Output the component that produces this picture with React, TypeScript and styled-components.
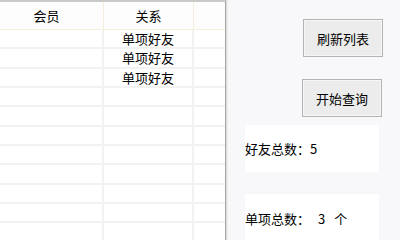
import React from "react";
import styled, { createGlobalStyle } from "styled-components";

interface Member {
  id: number,
  member: string,
  relation: string,
}

const members: Member[] = [
  { id: 1, member: "", relation: "单项好友" },
  { id: 2, member: "", relation: "单项好友" },
  { id: 3, member: "", relation: "单项好友" },
];

const ROW_COUNT = 11;

const App: React.FC = () => {
  const rows: Member[] = [...members];
  while (rows.length < ROW_COUNT) {
    rows.push({ id: rows.length + 1, member: "", relation: "" });
  }
  const oneWay = members.filter((m) => m.relation === "单项好友").length;

  return (
    <>
      <GlobalStyle />
      <Window>
        <Grid>
          <HeadCell first>会员</HeadCell>
          <HeadCell>关系</HeadCell>
          <HeadCell last />
          {rows.map((row) => (
            <React.Fragment key={row.id}>
              <Cell first>{row.member}</Cell>
              <Cell>{row.relation}</Cell>
              <Cell last />
            </React.Fragment>
          ))}
        </Grid>
        <SidePanel>
          <ActionButton>刷新列表</ActionButton>
          <ActionButton>开始查询</ActionButton>
          <StatBox>好友总数：5</StatBox>
          <StatBox tall>
            单项总数：<Value gap={8}>{oneWay}</Value>
            <Value gap={9}>个</Value>
          </StatBox>
        </SidePanel>
      </Window>
    </>
  );
};

export default App;

const GlobalStyle = createGlobalStyle`
  body {
    margin: 0;
    font-family: "Noto Sans CJK SC", "Noto Sans", sans-serif;
    font-size: 13px;
    color: #000;
    background: #f8f8fa;
  }
`;

const Window = styled.div`
  display: flex;
  width: 400px;
  height: 240px;
  overflow: hidden;
`;

const Grid = styled.div`
  display: grid;
  grid-template-columns: 104px 90px 1fr;
  grid-auto-rows: 19.33px;
  grid-template-rows: 28px;
  align-content: start;
  width: 225px;
  flex-shrink: 0;
  background: #fff;
  border-top: 2px solid #c9c9c9;
  border-right: 1px solid #a8a8a8;
  box-shadow: 1px 0 0 #dcdcdc, 2px 0 0 #efefef;
`;

const HeadCell = styled.div<{ first?: boolean, last?: boolean }>`
  display: flex;
  align-items: center;
  justify-content: center;
  padding-right: ${(p) => (p.first ? "10px" : "0")};
  background: #fdfdfd;
  border-bottom: 1px solid #f6eedc;
  border-right: ${(p) => (p.last ? "none" : "1px solid #f6eedc")};
  line-height: 1;
`;

const Cell = styled.div<{ first?: boolean, last?: boolean }>`
  display: flex;
  align-items: center;
  justify-content: center;
  padding-right: ${(p) => (p.first ? "10px" : "0")};
  border-bottom: 2px solid #f2f2f2;
  border-right: ${(p) => (p.last ? "none" : "2px solid #f2f2f2")};
  line-height: 1;
`;

const SidePanel = styled.div`
  flex: 1;
  display: flex;
  flex-direction: column;
  align-items: flex-start;
  padding: 19px 0 0 16px;
  margin-left: 3px;
  background: #f8f8fa;

  & > * {
    flex-shrink: 0;
  }
`;

const ActionButton = styled.button`
  margin-left: 58px;
  margin-bottom: 22px;
  width: 80px;
  height: 38px;
  padding: 0;
  font-family: inherit;
  font-size: 13px;
  color: #000;
  background: #ececec;
  border: 1px solid #b4b4b4;
  box-shadow: inset 0 0 0 1px #f6f6f6;

  &:nth-of-type(2) {
    margin-left: 57px;
    margin-bottom: 8px;
  }
`;

const StatBox = styled.div<{ tall?: boolean }>`
  display: flex;
  align-items: center;
  width: 134px;
  height: ${(p) => (p.tall ? "49px" : "47px")};
  margin-bottom: 22px;
  background: #fff;
  line-height: 1;
`;

const Value = styled.span<{ gap: number }>`
  margin-left: ${(p) => p.gap}px;
`;
